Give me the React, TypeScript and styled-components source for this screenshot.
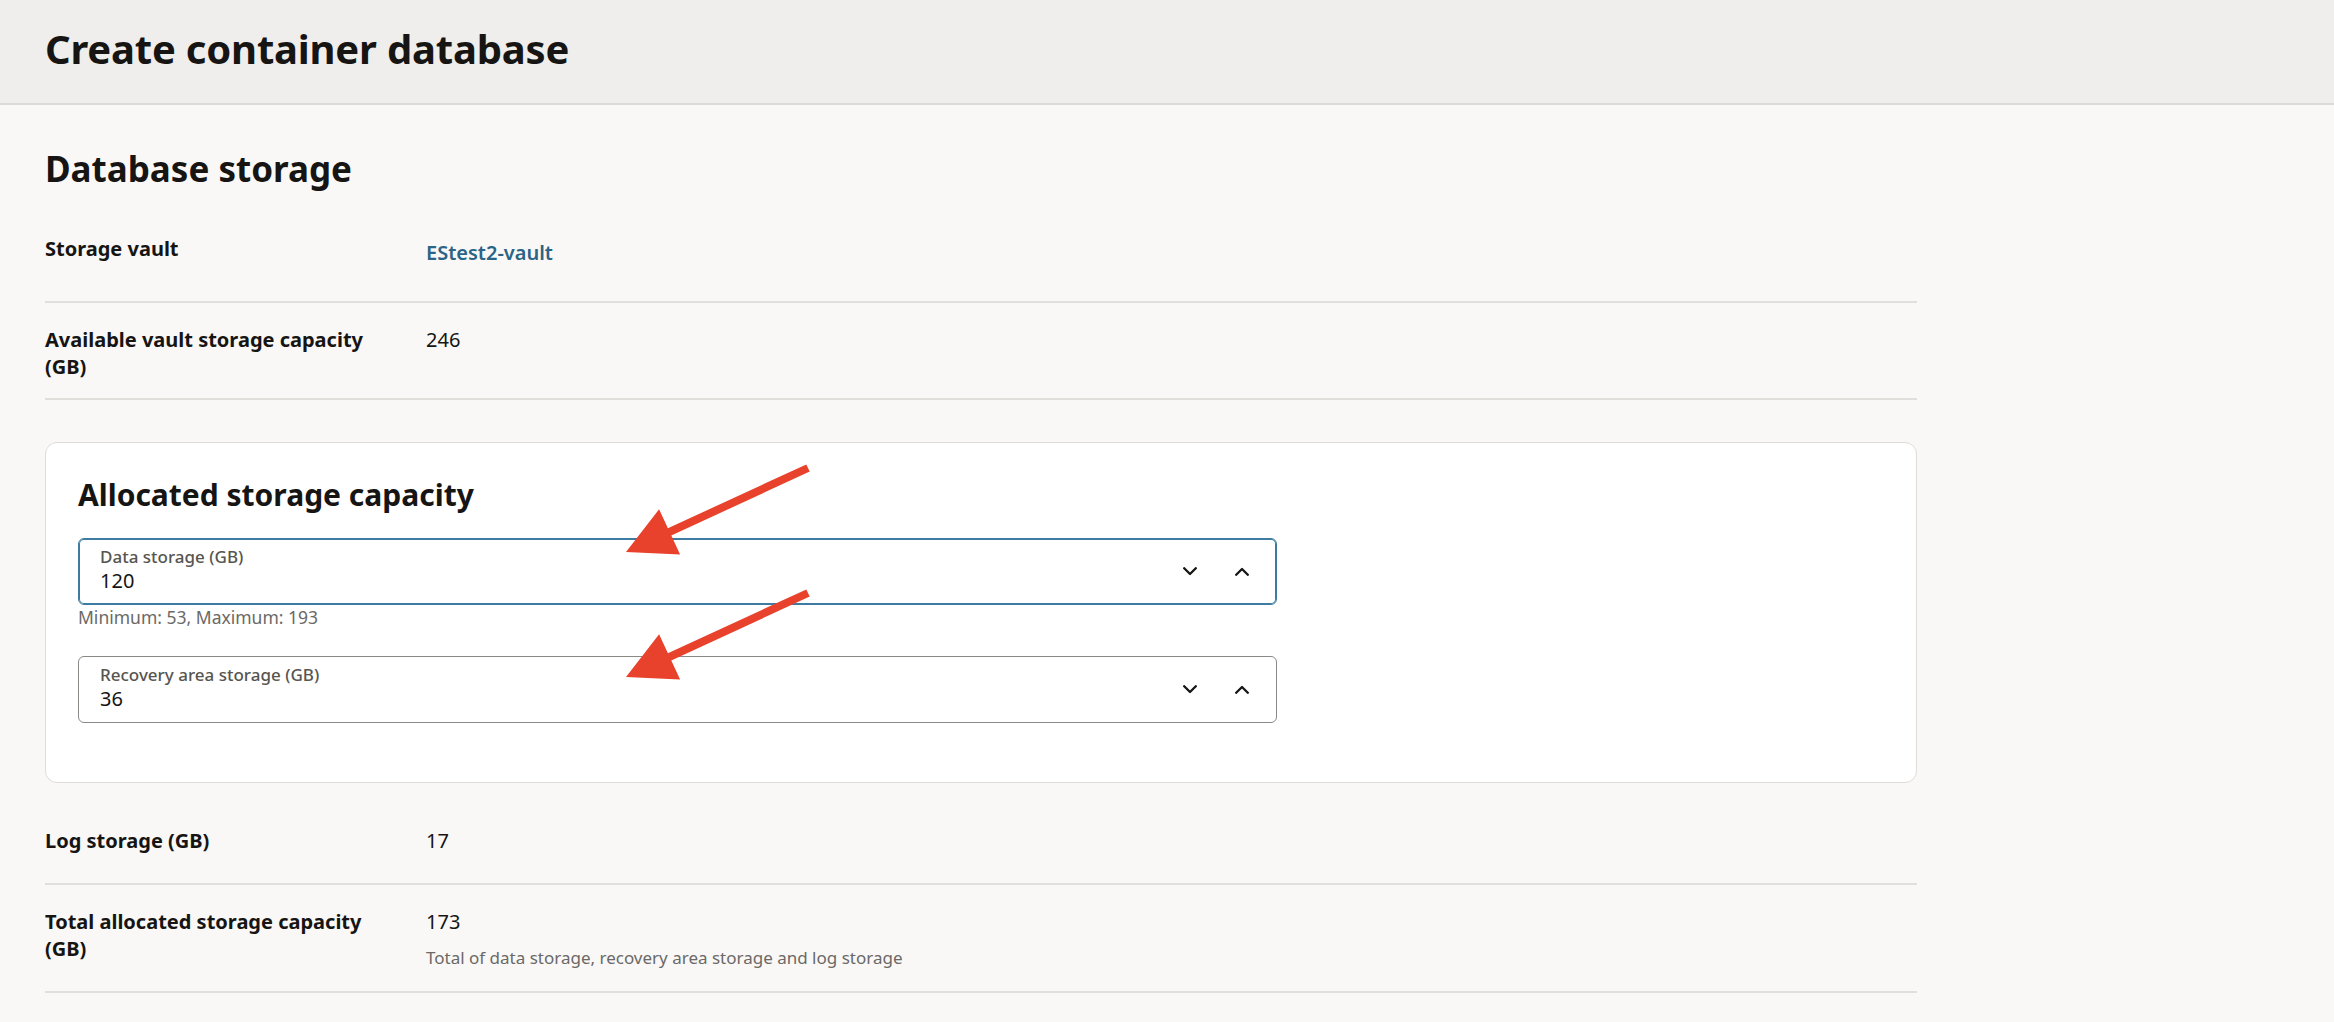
import React from "react";
import styled, { createGlobalStyle } from "styled-components";

const GlobalStyle = createGlobalStyle`
  html, body {
    margin: 0;
    padding: 0;
    background: #f9f8f6;
  }
  body {
    font-family: "Noto Sans", "Liberation Sans", sans-serif;
    color: #161513;
    -webkit-font-smoothing: antialiased;
  }
  * { box-sizing: border-box; }
`;

const Page = styled.div`
  position: relative;
  min-height: 1022px;
  background: #f9f8f6;
  overflow: hidden;
`;

const Header = styled.header`
  height: 105px;
  padding: 25px 45px 0;
  background: #efeeec;
  border-bottom: 2px solid #dcdad7;
`;

const PageTitle = styled.h1`
  margin: 0;
  font-size: 40px;
  line-height: 48px;
  font-weight: 700;
  letter-spacing: -0.2px;
  color: #161513;
`;

const Main = styled.main`
  width: 1962px;
  padding: 42px 45px 0;
`;

const SectionTitle = styled.h2`
  margin: 0 0 21px;
  font-size: 35px;
  line-height: 44px;
  font-weight: 700;
  color: #161513;
`;

const Row = styled.div<{ $minH: number }>`
  display: grid;
  grid-template-columns: 340px 1fr;
  column-gap: 41px;
  align-items: start;
  min-height: ${(p) => p.$minH}px;
  padding-top: 23px;
  border-bottom: 2px solid #e1dfdc;
`;

const Label = styled.div`
  font-size: 20px;
  line-height: 27px;
  font-weight: 700;
  color: #161513;
`;

const Value = styled.div`
  font-size: 20px;
  line-height: 27px;
  font-weight: 400;
  color: #161513;
`;

const VaultLink = styled.a`
  display: inline-block;
  margin-top: 4px;
  font-size: 20px;
  line-height: 27px;
  font-weight: 600;
  color: #2a6486;
  text-decoration: none;
  cursor: pointer;
`;

const Hint = styled.div<{ $gap: number; $size: number }>`
  margin-top: ${(p) => p.$gap}px;
  font-size: ${(p) => p.$size}px;
  line-height: 22px;
  color: #6b6966;
`;

const Card = styled.section`
  margin: 42px 0 21px;
  background: #ffffff;
  border: 1px solid #dedcd9;
  border-radius: 12px;
  padding: 33px 32px 59px;
`;

const CardTitle = styled.h3`
  margin: 0 0 24px;
  font-size: 30px;
  line-height: 38px;
  font-weight: 700;
  color: #161513;
`;

const Field = styled.div<{ $gap?: number }>`
  max-width: 1199px;
  margin-top: ${(p) => p.$gap ?? 0}px;
`;

const InputBox = styled.div<{ $focused?: boolean }>`
  display: flex;
  align-items: center;
  height: 67px;
  padding: 0 14px 0 21px;
  background: #ffffff;
  border: 1px solid ${(p) => (p.$focused ? "#3d7ca0" : "#8b8986")};
  box-shadow: ${(p) => (p.$focused ? "inset 0 0 0 1px #3d7ca0" : "none")};
  border-radius: 6px;
`;

const InputText = styled.div`
  flex: 1;
  align-self: flex-start;
  padding-top: 7px;
  display: flex;
  flex-direction: column;
`;

const InputLabel = styled.span`
  font-size: 17px;
  line-height: 22px;
  font-weight: 500;
  color: #57554f;
`;

const InputValue = styled.span`
  font-size: 20px;
  line-height: 26px;
  color: #161513;
`;

const Spinner = styled.div`
  display: flex;
  gap: 12px;
`;

const SpinButton = styled.button`
  width: 40px;
  height: 40px;
  display: flex;
  align-items: center;
  justify-content: center;
  padding: 0;
  border: none;
  background: transparent;
  color: #161513;
  cursor: pointer;
`;

const Overlay = styled.svg`
  position: absolute;
  top: 0;
  left: 0;
  pointer-events: none;
`;

const Chevron = ({ up }: { up?: boolean }) => (
  <svg width="14" height="9" viewBox="0 0 14 9" aria-hidden="true">
    <polyline
      points={up ? "1.2,7.8 7,2 12.8,7.8" : "1.2,1.2 7,7 12.8,1.2"}
      fill="none"
      stroke="currentColor"
      strokeWidth="2.3"
      strokeLinecap="round"
      strokeLinejoin="round"
    />
  </svg>
);

type NumberFieldProps = {
  label: string;
  value: number;
  focused?: boolean;
};

const NumberField = ({ label, value, focused }: NumberFieldProps) => (
  <InputBox $focused={focused}>
    <InputText>
      <InputLabel>{label}</InputLabel>
      <InputValue>{value}</InputValue>
    </InputText>
    <Spinner>
      <SpinButton aria-label="Decrease">
        <Chevron />
      </SpinButton>
      <SpinButton aria-label="Increase">
        <Chevron up />
      </SpinButton>
    </Spinner>
  </InputBox>
);

// Callout arrow: shaft from the tail to the head base, then a triangular head
const arrowPoints = (dy: number) =>
  [
    [806.3, 464.4],
    [667.9, 528.3],
    [659.1, 509.2],
    [626, 552],
    [680.1, 554.6],
    [671.3, 535.5],
    [809.7, 471.6],
  ]
    .map(([x, y]) => `${x},${y + dy}`)
    .join(" ");

export default function App() {
  return (
    <Page>
      <GlobalStyle />
      <Header>
        <PageTitle>Create container database</PageTitle>
      </Header>
      <Main>
        <SectionTitle>Database storage</SectionTitle>

        <Row $minH={91}>
          <Label>Storage vault</Label>
          <div>
            <VaultLink>EStest2-vault</VaultLink>
          </div>
        </Row>

        <Row $minH={97}>
          <Label>Available vault storage capacity (GB)</Label>
          <Value>246</Value>
        </Row>

        <Card>
          <CardTitle>Allocated storage capacity</CardTitle>
          <Field>
            <NumberField label="Data storage (GB)" value={120} focused />
            <Hint $gap={1} $size={17.5}>
              Minimum: 53, Maximum: 193
            </Hint>
          </Field>
          <Field $gap={28}>
            <NumberField label="Recovery area storage (GB)" value={36} />
          </Field>
        </Card>

        <Row $minH={81}>
          <Label>Log storage (GB)</Label>
          <Value>17</Value>
        </Row>

        <Row $minH={108}>
          <Label>Total allocated storage capacity (GB)</Label>
          <div>
            <Value>173</Value>
            <Hint $gap={12} $size={17}>
              Total of data storage, recovery area storage and log storage
            </Hint>
          </div>
        </Row>
      </Main>

      <Overlay width="2334" height="1022" viewBox="0 0 2334 1022">
        <polygon points={arrowPoints(0)} fill="#e8412c" />
        <polygon points={arrowPoints(125)} fill="#e8412c" />
      </Overlay>
    </Page>
  );
}
